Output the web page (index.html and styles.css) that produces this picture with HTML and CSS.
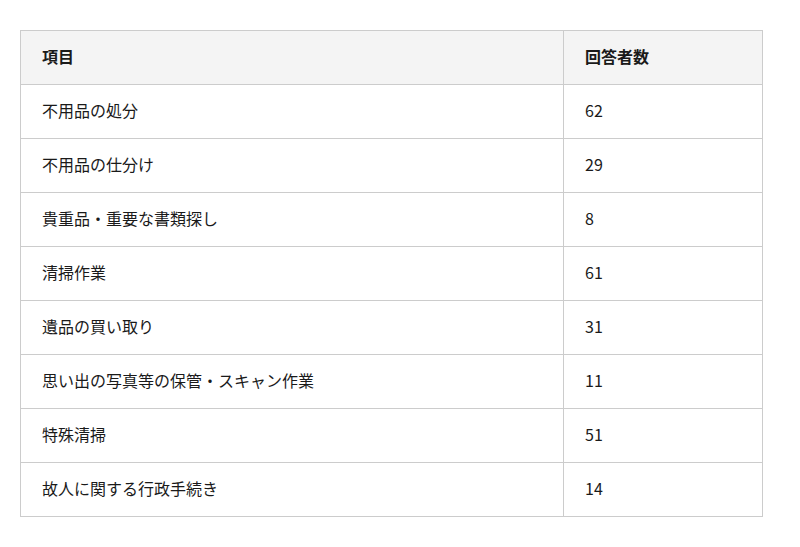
FILE: index.html
```html
<!DOCTYPE html>
<html lang="ja">
<head>
<meta charset="utf-8">
<link rel="stylesheet" href="styles.css">
</head>
<body>
<table class="tbl">
<thead>
<tr><th class="c1">項目</th><th class="c2">回答者数</th></tr>
</thead>
<tbody>
<tr><td>不用品の処分</td><td>62</td></tr>
<tr><td>不用品の仕分け</td><td>29</td></tr>
<tr><td>貴重品・重要な書類探し</td><td>8</td></tr>
<tr><td>清掃作業</td><td>61</td></tr>
<tr><td>遺品の買い取り</td><td>31</td></tr>
<tr><td>思い出の写真等の保管・スキャン作業</td><td>11</td></tr>
<tr><td>特殊清掃</td><td>51</td></tr>
<tr><td>故人に関する行政手続き</td><td>14</td></tr>
</tbody>
</table>
</body>
</html>
```
FILE: styles.css
```css
html, body {
  margin: 0;
  padding: 0;
  background: #ffffff;
}
body {
  padding: 30px 38px 0 20px;
  font-family: "Noto Sans CJK JP", sans-serif;
  font-size: 16px;
  color: #1a1a1a;
}
.tbl {
  border-collapse: collapse;
  width: 742px;
  table-layout: fixed;
}
.tbl th, .tbl td {
  border: 1px solid #cccccc;
  height: 54px;
  padding: 0 0 4px 21px;
  text-align: left;
  vertical-align: middle;
  box-sizing: border-box;
  line-height: 24px;
}
.tbl th {
  background: #f4f4f4;
  font-weight: bold;
}
.c1 { width: 543px; }
.c2 { width: 199px; }
```
